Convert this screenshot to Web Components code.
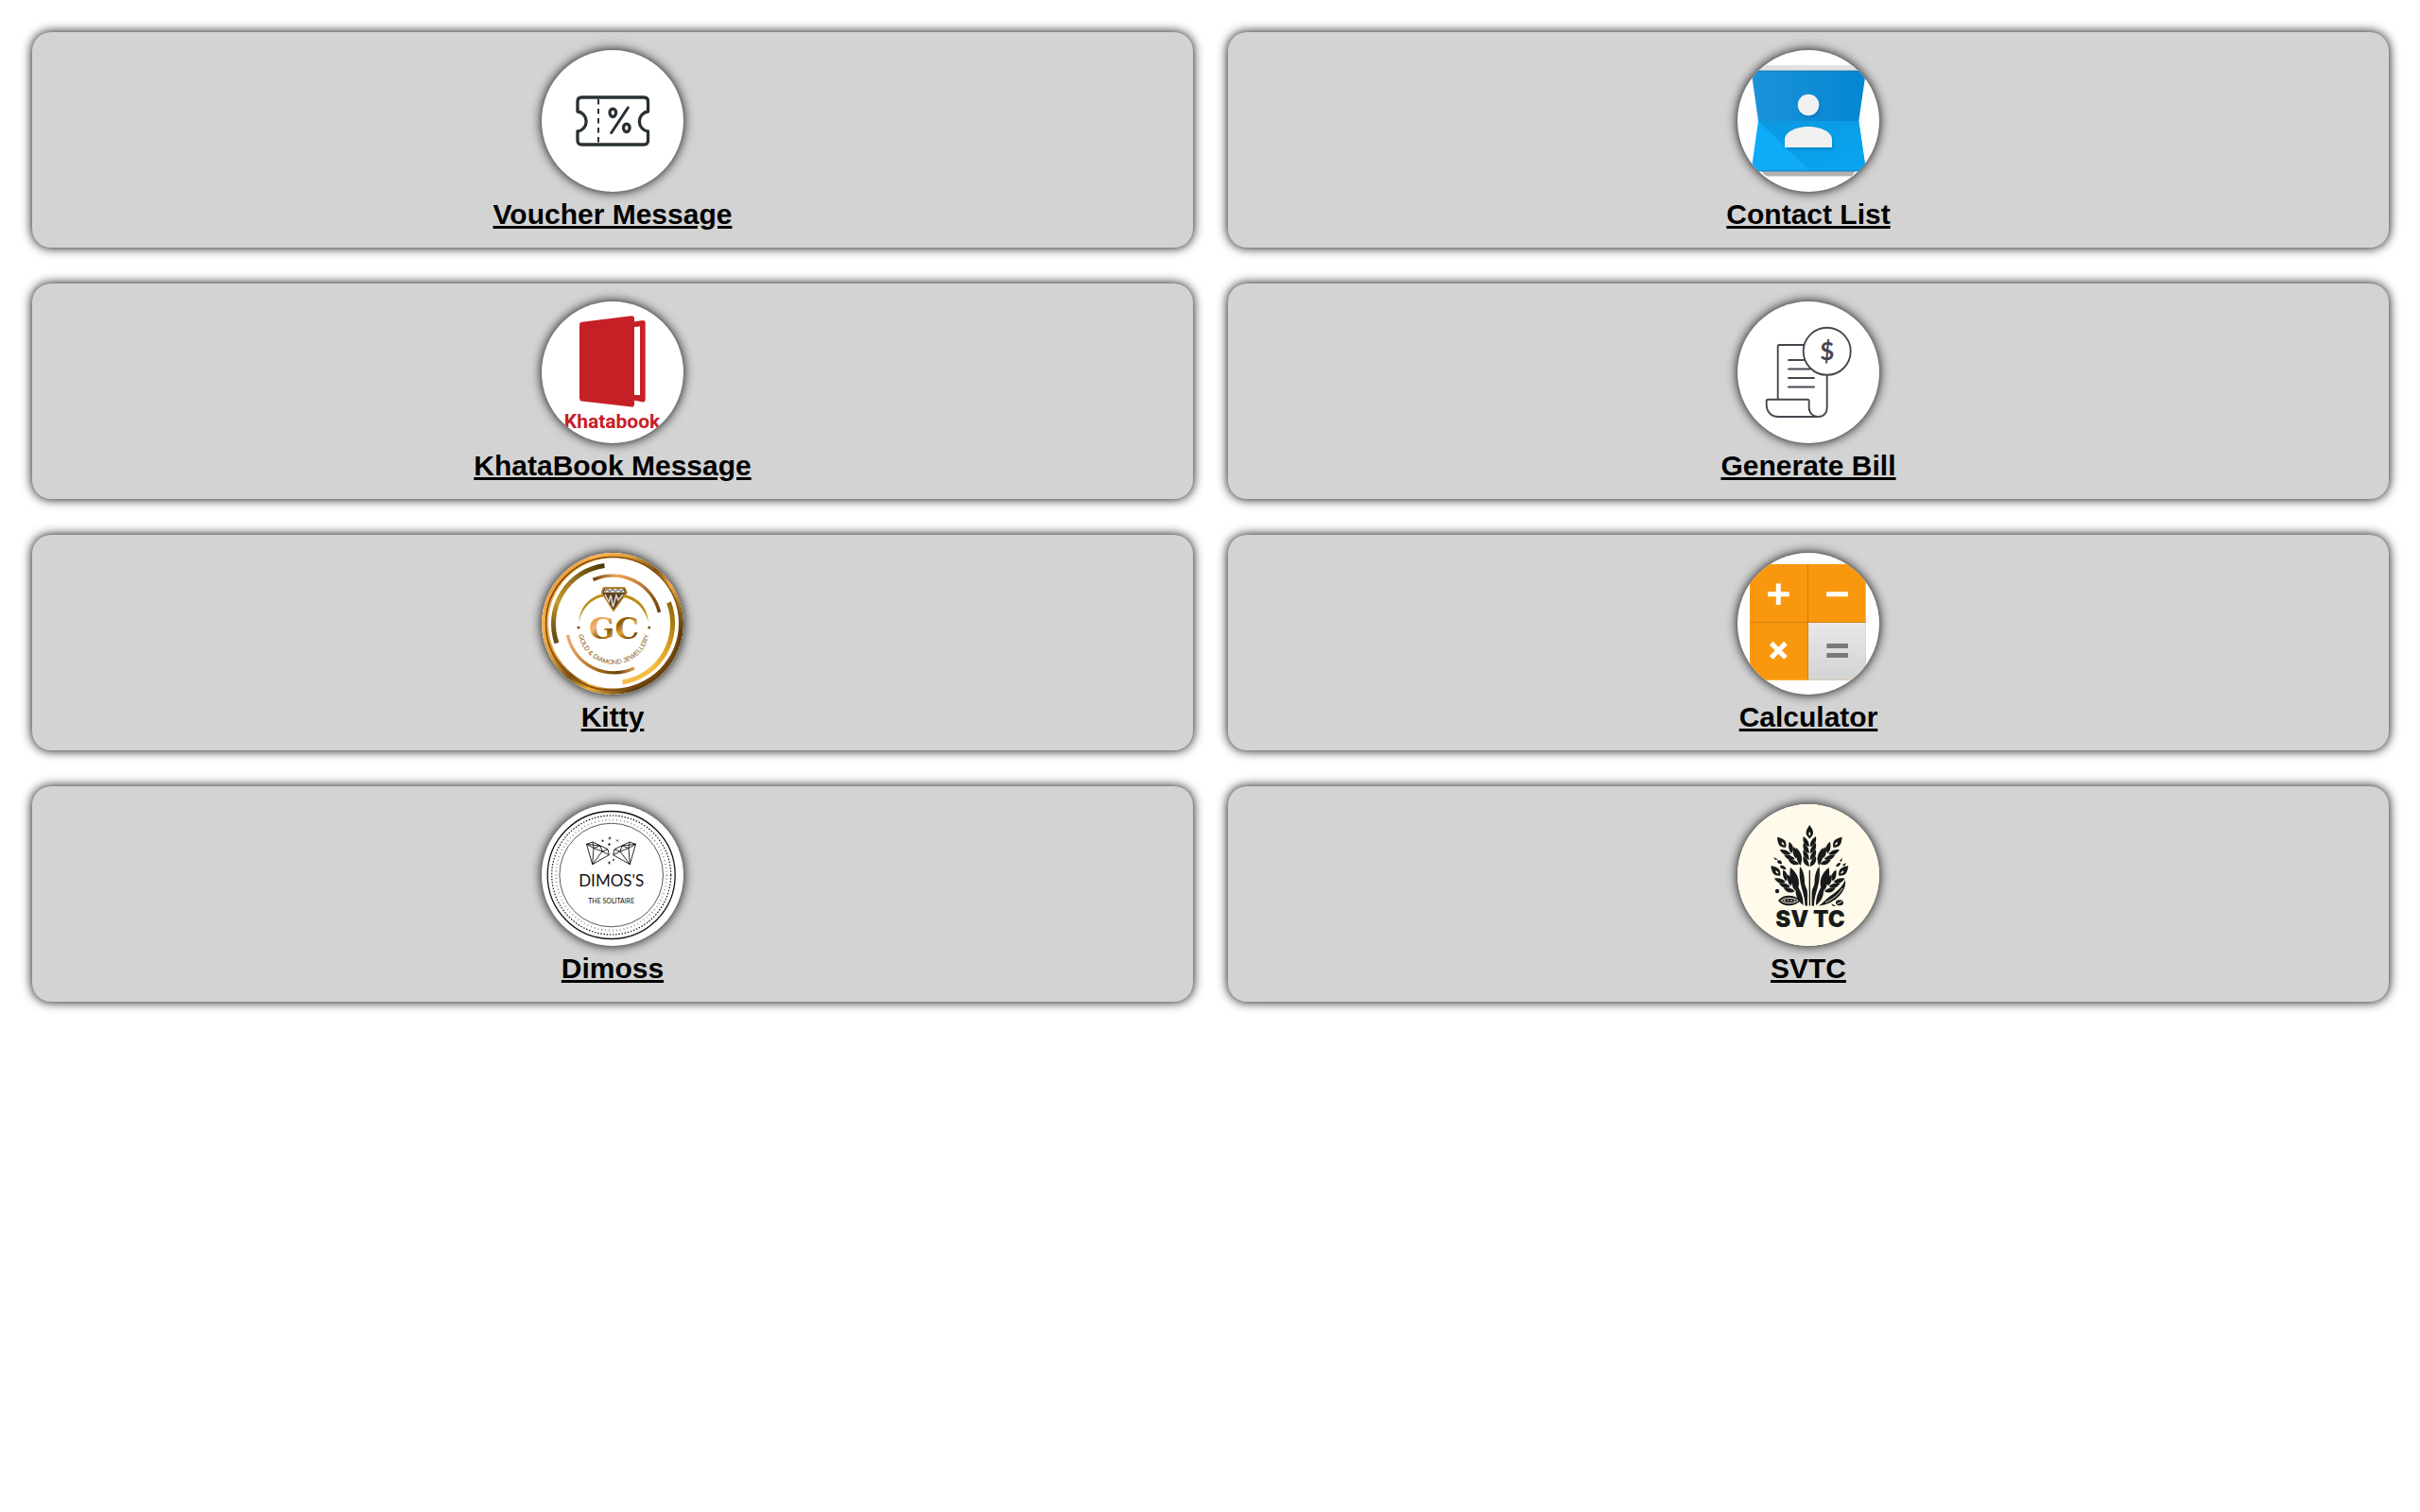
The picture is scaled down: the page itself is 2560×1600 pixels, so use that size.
<!DOCTYPE html>
<html lang="en">
<head>
<meta charset="utf-8">
<title>Home</title>
<style>
  body { margin: 0; background: #fff; color: #000; font-family: "Liberation Sans", Arial, sans-serif; }
</style>
</head>
<body>
<tile-grid>
  <launch-tile href="#voucher" label="Voucher Message"><icon-voucher></icon-voucher></launch-tile>
  <launch-tile href="#contacts" label="Contact List"><icon-contacts></icon-contacts></launch-tile>
  <launch-tile href="#khatabook" label="KhataBook Message"><icon-khatabook></icon-khatabook></launch-tile>
  <launch-tile href="#bill" label="Generate Bill"><icon-bill></icon-bill></launch-tile>
  <launch-tile href="#kitty" label="Kitty"><icon-kitty></icon-kitty></launch-tile>
  <launch-tile href="#calculator" label="Calculator"><icon-calculator></icon-calculator></launch-tile>
  <launch-tile href="#dimoss" label="Dimoss"><icon-dimoss></icon-dimoss></launch-tile>
  <launch-tile href="#svtc" label="SVTC"><icon-svtc></icon-svtc></launch-tile>
</tile-grid>

<script>
class TileGrid extends HTMLElement {
  constructor() {
    super();
    this.attachShadow({ mode: 'open' }).innerHTML = `
      <style>
        :host { display: block; padding: 34px 33px 34px 34px; }
        main { display: grid; grid-template-columns: repeat(2, minmax(0, 1fr)); gap: 38px 37px; }
      </style>
      <main><slot></slot></main>`;
  }
}
customElements.define('tile-grid', TileGrid);

class LaunchTile extends HTMLElement {
  constructor() {
    super();
    this.attachShadow({ mode: 'open' }).innerHTML = `
      <style>
        :host { display: block; }
        a {
          display: flex; flex-direction: column; align-items: center; gap: 7px;
          padding: 19px 19px 18px; border-radius: 20px; background: #d3d3d3;
          box-shadow: 0 0 12px #000; color: #000;
          font-size: 30px; line-height: 34px; font-weight: 700; text-decoration: none;
        }
        .disc { width: 150px; height: 150px; border-radius: 50%; overflow: hidden; background: #fff; box-shadow: 0 0 12px #000; }
        .label { text-decoration: underline; }
      </style>
      <a><span class="disc"><slot></slot></span><span class="label"></span></a>`;
  }
  connectedCallback() {
    this.shadowRoot.querySelector('a').href = this.getAttribute('href');
    this.shadowRoot.querySelector('.label').textContent = this.getAttribute('label');
  }
}
customElements.define('launch-tile', LaunchTile);

class DiscIcon extends HTMLElement {
  constructor() {
    super();
    this.attachShadow({ mode: 'open' }).innerHTML = `
      <style>
        :host { display: block; font-weight: 400; }
        svg { display: block; width: 150px; height: 150px; }
      </style>
      <svg viewBox="0 0 150 150" fill="none">${this.art()}</svg>`;
  }
  art() { return ''; }
}

customElements.define('icon-voucher', class extends DiscIcon {
  art() {
    return `
      <g stroke="#283033" stroke-width="3.3" stroke-linejoin="round">
        <path d="M38 65V54.500Q38 50 42.500 50H108Q112.500 50 112.500 54.500V65A10.600 10.600 0 0 0 112.500 86V95.500Q112.500 100 108 100H42.500Q38 100 38 95.500V86A10.600 10.600 0 0 0 38 65Z"/>
        <path d="M60 52V98" stroke-width="2" stroke-dasharray="5.500 4.500"/>
        <ellipse cx="75.300" cy="66.300" rx="3.300" ry="4.200"/>
        <ellipse cx="89.800" cy="82.300" rx="3.300" ry="4.200"/>
        <path d="M91.300 61L73.700 87.500" stroke-linecap="round" stroke-width="3"/>
      </g>`;
  }
});

customElements.define('icon-contacts', class extends DiscIcon {
  art() {
    return `
      <defs>
        <linearGradient id="up"><stop offset="0" stop-color="#1b93d9"/><stop offset="1" stop-color="#0486d3"/></linearGradient>
        <linearGradient id="sh" x1="0" y1="0" x2="1" y2="1"><stop offset="0" stop-color="#0c98e0"/><stop offset="1" stop-color="#08a5f1"/></linearGradient>
        <filter id="soft" x="-30%" y="-30%" width="160%" height="160%"><feDropShadow dx="1" dy="2" stdDeviation="1.500" flood-color="#03538a" flood-opacity=".35"/></filter>
      </defs>
      <path d="M28 16H122L128 22V30H22V22Z" fill="#e2e2e2"/>
      <path d="M25 127H125L121 133.500H32Q28 133 25 127Z" fill="#b1b1b1"/>
      <path d="M14.500 22H136L128.300 75H22Z" fill="url(#up)"/>
      <path d="M22 75H128.300L136 128H14.500Z" fill="#0eabf9"/>
      <path d="M22 75H128.300L136 128H77Z" fill="url(#sh)"/>
      <path d="M15 22H135M15 128H135" stroke="#0875b5" stroke-width=".8"/>
      <g fill="#f1f1f1" filter="url(#soft)">
        <circle cx="75" cy="58" r="11.200"/>
        <path d="M50 103V95C50 86 63 81 75 81S100 86 100 95V103Z"/>
      </g>`;
  }
});

customElements.define('icon-khatabook', class extends DiscIcon {
  art() {
    return `
      <g fill="#c62027">
        <path d="M40 24.500Q40 22 42.500 21.700L95 15.200Q98 15 98 18V108.500Q98 112 95 111.600L42.500 105.500Q40 105 40 102.500Z"/>
        <path fill-rule="evenodd" d="M97 21.500L107 20Q109.700 19.800 109.700 22.500V103.500Q109.700 107 106 106.300L97 104.500ZM98 27V99H104V26.500Z"/>
        <text x="74.500" y="134" text-anchor="middle" font-family="Roboto, sans-serif" font-weight="700" font-size="21">Khatabook</text>
      </g>`;
  }
});

customElements.define('icon-bill', class extends DiscIcon {
  art() {
    return `
      <g stroke="#47454e" stroke-width="1.900" stroke-linecap="round" stroke-linejoin="round">
        <path d="M42.700 103V47.500Q42.700 46 44.500 46H70"/>
        <path d="M94.700 78V112.500C94.700 118 91 122 85.500 122S75.700 118 75.700 112.500V105.500Q75.700 103.700 74 103.700H32.500Q30.700 103.700 30.700 105.500V109C30.700 117 36 122 43 122H85.500"/>
        <path d="M54 62H70M54 71.500H77M54 81H81M54 90.500H81"/>
        <circle cx="94.700" cy="52.800" r="25"/>
      </g>
      <text x="94.700" y="62" text-anchor="middle" font-family="Lato, sans-serif" font-weight="700" font-size="26" fill="#47454e">$</text>`;
  }
});

customElements.define('icon-kitty', class extends DiscIcon {
  art() {
    return `
      <defs>
        <linearGradient id="rim" x1="0" y1=".1" x2="1" y2=".9">
          <stop offset="0" stop-color="#d18a2c"/><stop offset=".2" stop-color="#ffb04a"/><stop offset=".35" stop-color="#dd9a38"/>
          <stop offset=".5" stop-color="#7d520f"/><stop offset=".62" stop-color="#f0aa38"/><stop offset=".82" stop-color="#5b3b0c"/><stop offset="1" stop-color="#8c5a14"/>
        </linearGradient>
        <linearGradient id="dark" x1="1" y1="0" x2="0" y2="1"><stop offset="0" stop-color="#4c3606"/><stop offset=".35" stop-color="#8d6a1a"/><stop offset=".7" stop-color="#c69a31"/><stop offset="1" stop-color="#574008"/></linearGradient>
        <linearGradient id="lite" x1="1" y1="0" x2="0" y2="1"><stop offset="0" stop-color="#8b6408"/><stop offset=".3" stop-color="#d69a1b"/><stop offset=".6" stop-color="#f7bd3d"/><stop offset="1" stop-color="#f3bd4c"/></linearGradient>
        <linearGradient id="cop"><stop offset="0" stop-color="#75440a"/><stop offset=".35" stop-color="#eda35a"/><stop offset=".7" stop-color="#c9833a"/><stop offset="1" stop-color="#6e430d"/></linearGradient>
        <linearGradient id="cop2"><stop offset="0" stop-color="#f0a763"/><stop offset=".5" stop-color="#9c6114"/><stop offset=".75" stop-color="#6b4307"/><stop offset="1" stop-color="#dc9a52"/></linearGradient>
        <linearGradient id="gc" x1="0" y1="0" x2="1" y2="1"><stop offset=".1" stop-color="#d98a3a"/><stop offset=".3" stop-color="#f3b774"/><stop offset=".48" stop-color="#8b5a06"/><stop offset=".62" stop-color="#dba52f"/><stop offset=".8" stop-color="#7a4b08"/><stop offset="1" stop-color="#e8a463"/></linearGradient>
        <path id="curve" d="M38.500 82A37.800 37.800 0 0 0 114 82"/>
      </defs>
      <circle cx="75" cy="75" r="75" fill="url(#rim)"/>
      <circle cx="75" cy="75" r="70.500" stroke="#7a4a0c" stroke-width="1.500"/>
      <circle cx="76" cy="74.500" r="69" fill="#fff"/>
      <path d="M66.500 13.500A62 62 0 0 0 16 95.500" stroke="url(#dark)" stroke-width="5"/>
      <path d="M134.500 52.500A63 63 0 0 1 85.500 137" stroke="url(#lite)" stroke-width="5"/>
      <path d="M54.500 28.500A51 51 0 0 1 124.500 63" stroke="url(#cop)" stroke-width="3.600"/>
      <path d="M27.500 87A50 50 0 0 0 98 122" stroke="url(#cop2)" stroke-width="3.300"/>
      <path d="M39.500 73C41 55 52 46 66 43L67 46C54 48 43 57 39.500 73ZM113 73C111 55 101 47 87 44L86 47C98 49 108 57 113 73Z" fill="#bd8c17"/>
      <path d="M66 36.500H87L90.500 42L76 62L63 42Z" fill="#5f4420"/>
      <path d="M67.500 38H86L88 42H65.500Z" fill="#d9d6d2"/>
      <path d="M67 44L71 52L73 45L75.500 57L79 45L81 50L86 44" stroke="#d8d5de" stroke-width="1.500"/>
      <path d="M67 41L69.500 38L72 41.500L75 38L78 41.500L81 38L84 41.500L86 38.500" stroke="#5c5358" stroke-width="1"/>
      <path d="M65.500 37H88L90 42L76 61.500L63.500 42Z" stroke="#c08a25" stroke-width="1.300"/>
      <text x="76.500" y="91" text-anchor="middle" font-family="DejaVu Serif, serif" font-weight="700" font-size="32" fill="url(#gc)">GC</text>
      <g fill="#85500d">
        <circle cx="39" cy="79" r="1.500"/><circle cx="113.700" cy="79" r="1.500"/>
        <text font-family="Liberation Sans, sans-serif" font-size="7" text-anchor="middle"><textPath href="#curve" startOffset="50%">GOLD &amp; DIAMOND JEWELLERY</textPath></text>
      </g>`;
  }
});

customElements.define('icon-calculator', class extends DiscIcon {
  art() {
    return `
      <defs>
        <linearGradient id="eq" x1="0" y1="0" x2="0" y2="1"><stop offset="0" stop-color="#e8e8e8"/><stop offset="1" stop-color="#d3d3d3"/></linearGradient>
        <clipPath id="box"><rect x="13" y="12" width="122.700" height="122.700" rx="20"/></clipPath>
      </defs>
      <g clip-path="url(#box)">
        <path d="M13 12H136V135H13Z" fill="#f9980e"/>
        <path d="M75 74H136V135H75Z" fill="url(#eq)"/>
        <path d="M74.500 12V135M13 73.500H136" stroke="#d17f10"/>
      </g>
      <path d="M32 43.700H54.700M43.300 32.500V55M94 43.700H117" stroke="#fff" stroke-width="5"/>
      <path d="M35.700 95.700L51 111M51 95.700L35.700 111" stroke="#fff" stroke-width="5.200"/>
      <path d="M94.300 98.500H117M94.300 108.500H117" stroke="#7a7a7a" stroke-width="5"/>`;
  }
});

customElements.define('icon-dimoss', class extends DiscIcon {
  art() {
    const gem = `<path d="M47.500 42.300L54 40L70 47.700L71.300 53.700L53.700 63.700ZM47.500 42.300L55 46.500L64 50L71.300 53.700M54 40L55 46.500L53.700 63.700L64 50L70 47.700M55 46.500L62 44L64 50M47.500 42.300L62 44"/>`;
    return `
      <g stroke="#111">
        <circle cx="73.700" cy="75" r="67.500" stroke-width="1.300"/>
        <circle cx="73.700" cy="75" r="63" stroke-width="1.200" stroke-dasharray="1.500 1.700"/>
        <circle cx="73.700" cy="75" r="58.500" stroke="#777" stroke-width="2" stroke-dasharray=".7 3.200"/>
        <circle cx="73.700" cy="75" r="54.800" stroke-width=".7"/>
        <g stroke-width=".9" stroke-linejoin="round">${gem}<g transform="translate(147 0) scale(-1 1)">${gem}</g></g>
        <path d="M72 34.500V37.500M70.500 36H73.500M71.500 41V44M70 42.500H73M64.500 37.500V40M63.300 38.700H65.700M79 37.500L81 39.500M79 39.500L81 37.500M71.500 60.500V63.500M70 62H73M76 58V60M75 59H77" stroke-width=".8"/>
      </g>
      <g fill="#111" text-anchor="middle" font-family="Lato, sans-serif">
        <text x="73.700" y="87" font-size="17">DIMOS'S</text>
        <text x="73.700" y="105" font-size="7">THE SOLITAIRE</text>
      </g>`;
  }
});

customElements.define('icon-svtc', class extends DiscIcon {
  art() {
    const grain = y => `<path d="M-.5 ${y + 8}C-6 ${y + 6.5} -7.800 ${y + 2} -6.500 ${y - 3}C-2.500 ${y} -.3 ${y + 3} -.5 ${y + 8}ZM.5 ${y + 8}C6 ${y + 6.5} 7.800 ${y + 2} 6.500 ${y - 3}C2.500 ${y} .3 ${y + 3} .5 ${y + 8}Z"/>`;
    const ear = n => `<path fill-rule="evenodd" d="M0 0C5 7 5 10 0 14.500C-5 10 -5 7 0 0ZM0 7C-1.200 9 -1.200 10 0 11.500C1.200 10 1.200 9 0 7Z"/>` +
      Array.from({ length: n }, (_, i) => grain(15 + i * 7)).join('');
    const half = `
      <g transform="translate(42 34.700) rotate(-40)">${ear(3)}</g>
      <g transform="translate(35.300 65.300) rotate(-44)">${ear(3)}</g>
      <path d="M62 46C69 52 69 59 66.500 65C62 59 61 53 62 46Z"/>
      <path d="M56 67C65 74 67 84 63 91C57 85 54 77 56 67Z"/>
      <path d="M66 66C69 69 71 75 71 82C71 87 74 89 74 94V107.500H71.500C71.500 93 64 86 66 66Z"/>
      <path d="M62 84C67 92 70 99 69.500 107C63 102 60 95 62 84Z"/>`;
    return `
      <rect width="150" height="150" fill="#fffae9"/>
      <g fill="#181a1b">
        <g transform="translate(76.300 22)">${ear(4)}</g>
        ${half}<g transform="translate(152.600 0) scale(-1 1)">${half}</g>
        <path d="M75.700 70H77V107.500H75.700Z"/>
        <path d="M38 56L43 58.500L40 59ZM42 60C45 58 47 60 47 63C44 64 42 62 42 60ZM45 65C48 64 51 66 51.500 69C48 69 45 68 45 65Z"/>
        <path d="M108 60L111 56.500L110 61ZM104 66C105 62.500 107 61.500 109 62C109 65 107 66.500 104 66ZM111 64L115 62L113 66Z"/>
        <circle cx="42" cy="92" r="2.200"/>
        <path d="M43 102C48 95 60 95 67 102C60 109 48 109 43 102Z"/>
        <path d="M114 80C116 93 102 106 86 107.500C91 104 93 101 97 98C106 92 111 87 114 80Z"/>
        <ellipse cx="108" cy="104.300" rx="4" ry="3"/><path d="M99 105L104 107.500L101 108Z"/>
      </g>
      <path d="M46 102C50 98.500 60 98.500 64 102C60 105.500 50 105.500 46 102Z" stroke="#fffae9" stroke-width=".9"/>
      <path d="M49 102H61" stroke="#fffae9" stroke-width="1.200" stroke-dasharray="2 1.500"/>
      <path d="M111 89C107 96 100 101 93 104M105.500 105.500L110.500 103" stroke="#fffae9" stroke-width=".9"/>
      <text x="77" y="130" text-anchor="middle" font-family="Inter, sans-serif" font-weight="900" font-size="24" fill="#181a1b">SV TC</text>`;
  }
});
</script>
</body>
</html>
